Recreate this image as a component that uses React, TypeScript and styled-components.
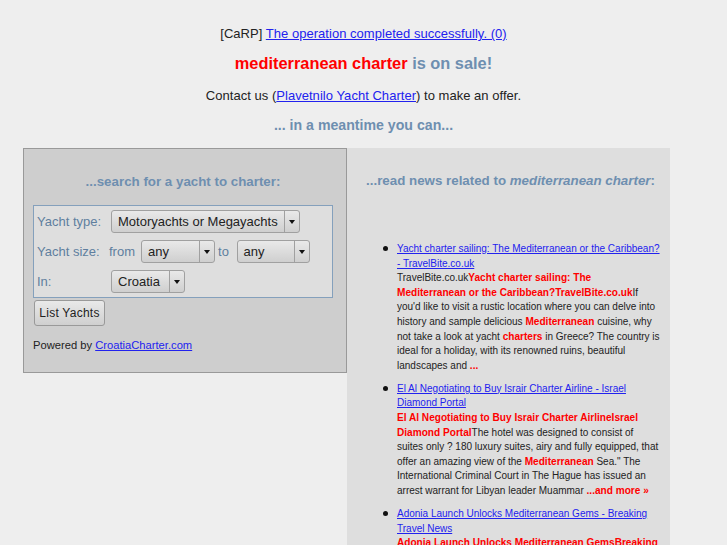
import React from "react";
import styled, { createGlobalStyle } from "styled-components";

const Global = createGlobalStyle`
  html, body { margin: 0; padding: 0; height: 100%; overflow: hidden; background: #eeeeee; }
  body { font-family: "Liberation Sans", Arial, sans-serif; font-size: 13px; color: #222; }
`;
const Page = styled.div`height: 545px; overflow: hidden; padding-top: 26px; box-sizing: border-box;`;
const Center = styled.div`width: 727px; text-align: center;`;
const Line = styled.p`margin: 0; height: 16px; line-height: 16px; font-size: 13px; letter-spacing: 0.03px;`;
const Headline = styled.h2`margin: 10px 0 0; height: 22px; line-height: 22px; font-size: 16.36px; font-weight: bold; color: #6e8fb0;`;
const Red = styled.span`color: #ff0000;`;
const Contact = styled(Line)`margin-top: 14px;`;
const Meantime = styled.h3`margin: 11px 0 0; height: 20px; line-height: 20px; font-size: 14.15px; font-weight: bold; color: #6e8fb0;`;
const Link = styled.a`color: #2222ee; text-decoration: underline;`;
const Columns = styled.div`display: flex; align-items: flex-start; margin: 13px 0 0 23px;`;
const SearchPanel = styled.section`width: 324px; height: 225px; box-sizing: border-box; background: #cecece; border: 1px solid #999; padding: 24px 9px 0 9px;`;
const PanelTitle = styled.h3`margin: 0; font-size: 13.33px; line-height: 18px; font-weight: bold; color: #6e8fb0; text-align: center;`;
const SearchTitle = styled(PanelTitle)`padding-right: 4px;`;
const NewsTitle = styled(PanelTitle)`padding-left: 9px;`;
const FormBox = styled.div`margin-top: 14px; width: 300px; height: 93px; box-sizing: border-box; background: #dedede; border: 1px solid #84a0bc; padding: 4px 3px 0; display: flex; flex-direction: column; gap: 7px;`;
const Row = styled.div`display: flex; align-items: center; height: 23px; color: #5f7f9f; font-size: 13px;`;
const Label = styled.span`width: 74px; flex: none;`;
const SizeLabel = styled.span`width: 72px; flex: none;`;
const Word = styled.span<{ $w: number }>`width: ${(p) => p.$w}px; flex: none;`;
const Select = styled.div<{ $w: number }>`
  width: ${(p) => p.$w}px; height: 23px; box-sizing: border-box; flex: none; display: flex;
  border: 1px solid #a0a0a0; border-radius: 3px; background: linear-gradient(#e9e9e9, #cfcfcf);
  color: #222; font-size: 13px;
`;
const SelectText = styled.span`flex: 1; padding-left: 6px; line-height: 21px; white-space: nowrap; overflow: hidden;`;
const Arrow = styled.span`
  width: 14px; flex: none; border-left: 1px solid #a0a0a0; display: flex; align-items: center; justify-content: center;
  &::after { content: ""; border-left: 3.5px solid transparent; border-right: 3.5px solid transparent; border-top: 4px solid #111; }
`;
const ListButton = styled.div`
  margin: 2px 0 0 1px; width: 71px; height: 26px; box-sizing: border-box; border: 1px solid #999; border-radius: 3px;
  background: linear-gradient(#e9e9e9, #cfcfcf); color: #222; font-size: 12px; letter-spacing: 0.25px; line-height: 24px; text-align: center;
`;
const Powered = styled.p`margin: 12px 0 0; font-size: 11.2px; line-height: 14px; color: #222;`;
const NewsPanel = styled.section`width: 323px; height: 397px; box-sizing: border-box; background: #dedede; padding: 24px 10px 0 5px; overflow: hidden;`;
const NewsList = styled.ul`margin: 52px 0 0; padding: 0 0 0 45px; list-style: none; font-size: 10px; line-height: 14.6px; color: #222;`;
const NewsItem = styled.li`
  position: relative; margin-bottom: 8.5px;
  &::before { content: ""; position: absolute; left: -14px; top: 4px; width: 5px; height: 5px; border-radius: 50%; background: #111; }
`;
const Hit = styled.b`color: #ff0000; font-size: 10.1px;`;

function Pick({ w, children }: { w: number; children: React.ReactNode }) {
  return <Select $w={w}><SelectText>{children}</SelectText><Arrow /></Select>;
}

export default function App() {
  return (
    <Page>
      <Global />
      <Center>
        <Line>[CaRP] <Link href="#">The operation completed successfully. (0)</Link></Line>
        <Headline><Red>mediterranean charter</Red> is on sale!</Headline>
        <Contact>Contact us (<Link href="#">Plavetnilo Yacht Charter</Link>) to make an offer.</Contact>
        <Meantime>... in a meantime you can...</Meantime>
      </Center>
      <Columns>
        <SearchPanel>
          <SearchTitle>...search for a yacht to charter:</SearchTitle>
          <FormBox>
            <Row><Label>Yacht type:</Label><Pick w={189}>Motoryachts or Megayachts</Pick></Row>
            <Row><SizeLabel>Yacht size:</SizeLabel><Word $w={32}>from</Word><Pick w={73.5}>any</Pick><Word $w={22}>&nbsp;to</Word><Pick w={73.5}>any</Pick></Row>
            <Row><Label>In:</Label><Pick w={73.5}>Croatia</Pick></Row>
          </FormBox>
          <ListButton>List Yachts</ListButton>
          <Powered>Powered by <Link href="#">CroatiaCharter.com</Link></Powered>
        </SearchPanel>
        <NewsPanel>
          <NewsTitle>...read news related to <i>mediterranean charter</i>:</NewsTitle>
          <NewsList>
            <NewsItem>
              <Link href="#">Yacht charter sailing: The Mediterranean or the Caribbean? - TravelBite.co.uk</Link><br />
              TravelBite.co.uk<Hit>Yacht charter sailing: The Mediterranean or the Caribbean?TravelBite.co.uk</Hit>If you'd like to visit a rustic location where you can delve into history and sample delicious <Hit>Mediterranean</Hit> cuisine, why not take a look at yacht <Hit>charters</Hit> in Greece? The country is ideal for a holiday, with its renowned ruins, beautiful landscapes and <Hit>...</Hit>
            </NewsItem>
            <NewsItem>
              <Link href="#">El Al Negotiating to Buy Israir Charter Airline - Israel Diamond Portal</Link><br />
              <Hit>El Al Negotiating to Buy Israir Charter AirlineIsrael Diamond Portal</Hit>The hotel was designed to consist of suites only ? 180 luxury suites, airy and fully equipped, that offer an amazing view of the <Hit>Mediterranean</Hit> Sea." The International Criminal Court in The Hague has issued an arrest warrant for Libyan leader Muammar <Hit>...and more »</Hit>
            </NewsItem>
            <NewsItem>
              <Link href="#">Adonia Launch Unlocks Mediterranean Gems - Breaking Travel News</Link><br />
              <Hit>Adonia Launch Unlocks Mediterranean GemsBreaking</Hit>
            </NewsItem>
          </NewsList>
        </NewsPanel>
      </Columns>
    </Page>
  );
}
